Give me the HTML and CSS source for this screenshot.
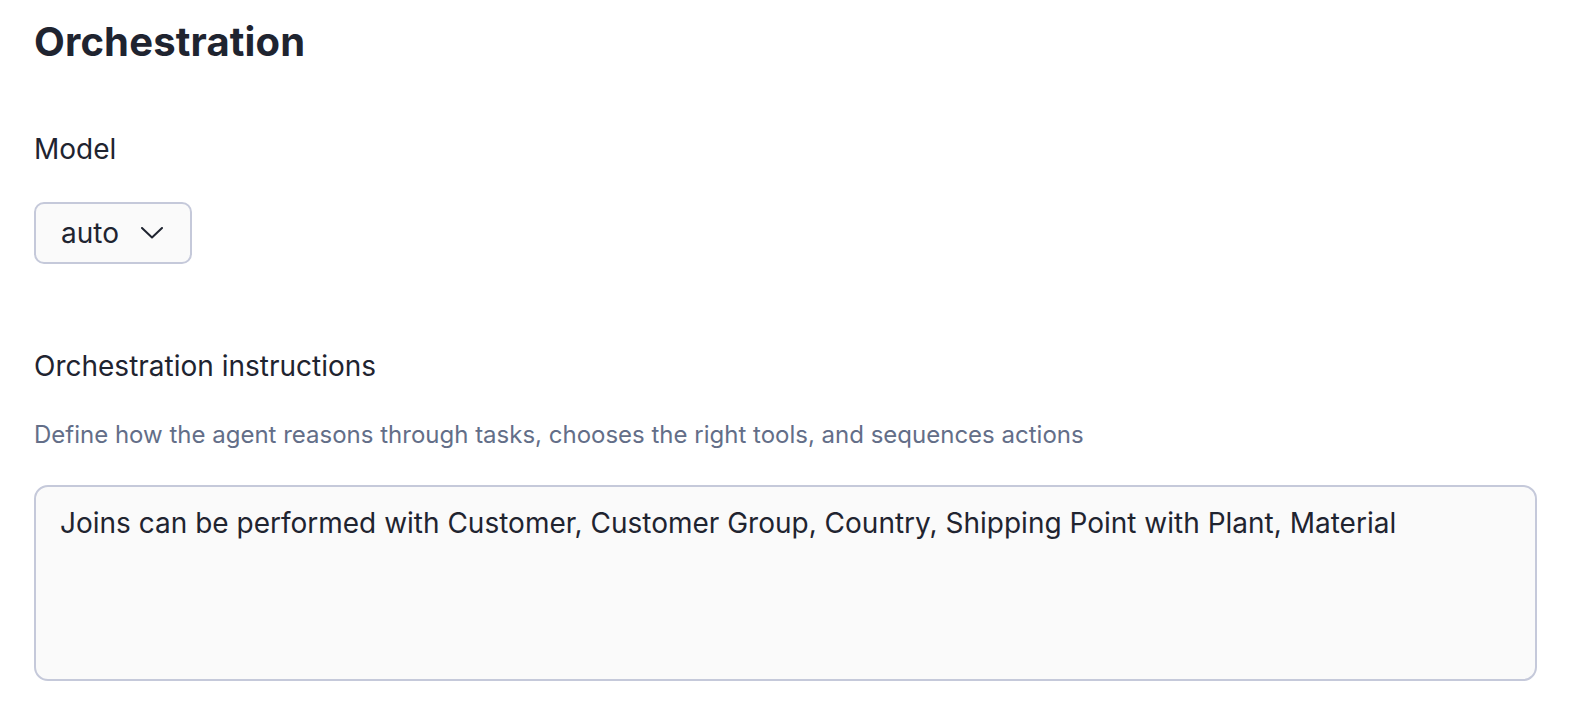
FILE: index.html
```html
<!DOCTYPE html>
<html lang="en">
<head>
<meta charset="utf-8">
<title>Orchestration</title>
<link rel="stylesheet" href="styles.css">
</head>
<body>
<main class="page">
  <h1 class="title">Orchestration</h1>
  <section class="field field-model">
    <div class="label">Model</div>
    <button class="select" type="button">
      <span class="select-value">auto</span>
      <svg class="chevron" width="22" height="12" viewBox="0 0 22 12" aria-hidden="true">
        <polyline points="1,1 11,10.5 21,1" fill="none" stroke="#1f2430" stroke-width="2" stroke-linecap="round" stroke-linejoin="round"/>
      </svg>
    </button>
  </section>
  <section class="field field-instructions">
    <div class="label">Orchestration instructions</div>
    <p class="hint">Define how the agent reasons through tasks, chooses the right tools, and sequences actions</p>
    <div class="textarea">Joins can be performed with Customer, Customer Group, Country, Shipping Point with Plant, Material</div>
  </section>
</main>
</body>
</html>
```

FILE: styles.css
```css
html, body {
  margin: 0;
  padding: 0;
  background: #ffffff;
}

body {
  font-family: Inter, "Noto Sans", "Liberation Sans", sans-serif;
  color: #1f2430;
}

.page {
  padding: 18px 53px 0 34px;
  display: flex;
  flex-direction: column;
}

.title {
  margin: 0;
  font-size: 40px;
  line-height: 48px;
  font-weight: 700;
  letter-spacing: 0.15px;
  color: #1f2430;
}

.field {
  display: flex;
  flex-direction: column;
  align-items: flex-start;
}

.field-model {
  margin-top: 63px;
}

.label {
  font-size: 28px;
  line-height: 40px;
  font-weight: 400;
  color: #1f2430;
}

.select {
  margin-top: 33px;
  height: 62px;
  box-sizing: border-box;
  display: flex;
  align-items: center;
  gap: 22px;
  padding: 0 27px 0 25px;
  border: 2px solid #c5c9da;
  border-radius: 10px;
  background: #fafafa;
  font-family: inherit;
  font-size: 28px;
  line-height: 40px;
  color: #1f2430;
}

.select-value {
  display: block;
}

.chevron {
  display: block;
}

.field-instructions {
  margin-top: 82px;
  align-items: stretch;
}

.hint {
  margin: 33px 0 0;
  font-size: 24px;
  line-height: 32px;
  color: #636e88;
}

.textarea {
  margin-top: 34px;
  height: 196px;
  box-sizing: border-box;
  border: 2px solid #c5c9da;
  border-radius: 14px;
  background: #fafafa;
  padding: 16px 24px;
  font-size: 28px;
  line-height: 40px;
  color: #1f2430;
}
```
